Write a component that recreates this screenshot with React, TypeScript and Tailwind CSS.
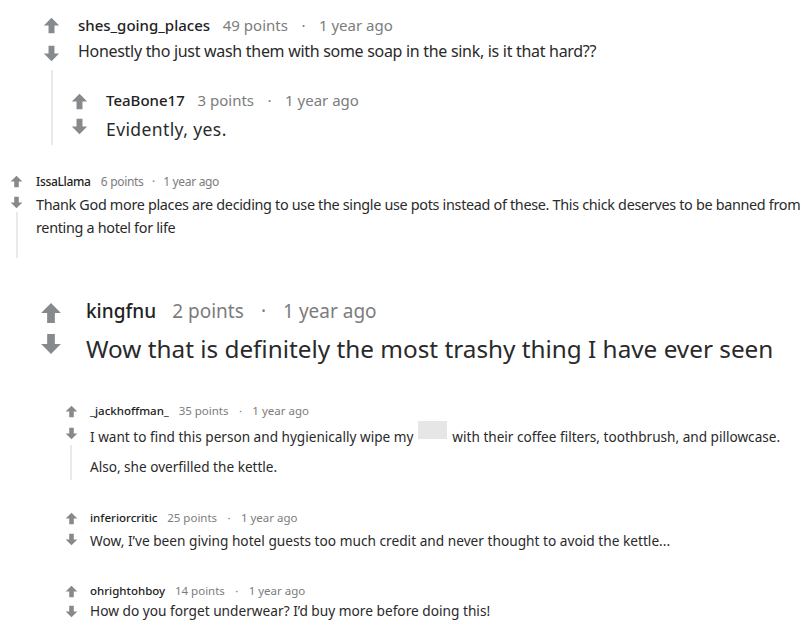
import React from 'react';

type Dir = 'up' | 'down';

const Arrow = ({ dir, size }: { dir: Dir; size: number }) => (
    <svg width={size} height={size} viewBox="0 0 20 20" className="block shrink-0">
        <path
            d={dir === 'up' ? 'M10 1 L19 10 H13.5 V19 H6.5 V10 H1 Z' : 'M10 19 L19 10 H13.5 V1 H6.5 V10 H1 Z'}
            fill="#878a8c"
        />
    </svg>
);

interface CommentProps {
    user: string;
    points: string;
    arrow: number;
    colClass: string; // vote column: width + top offset
    downClass: string; // space between up and down arrows
    lineClass?: string; // thread line, if any
    contentClass: string;
    metaClass: string;
    bodyClass: string;
    dotClass?: string;
    className?: string;
    children: React.ReactNode;
    replies?: React.ReactNode;
}

const Comment: React.FC<CommentProps> = ({
    user, points, arrow, colClass, downClass, lineClass, contentClass, metaClass, bodyClass, dotClass, className, children, replies,
}) => (
    <div className={`flex ${className ?? ''}`}>
        <div className={`flex flex-col items-center shrink-0 ${colClass}`}>
            <Arrow dir="up" size={arrow} />
            <div className={downClass}>
                <Arrow dir="down" size={arrow} />
            </div>
            {lineClass && <div className={`w-[2px] bg-[#e8e9eb] ${lineClass}`} />}
        </div>
        <div className={`flex flex-col ${contentClass}`}>
            <div className={`flex items-baseline whitespace-nowrap text-[#7c7c7c] ${metaClass}`}>
                <span className="text-[#222] font-medium">{user}</span>
                <span className="ml-[0.85em]">{points}</span>
                <span className={dotClass ?? 'mx-[0.9em]'}>·</span>
                <span>1 year ago</span>
            </div>
            <div className={`text-[#2a2a2a] ${bodyClass}`}>{children}</div>
            {replies}
        </div>
    </div>
);

export default function App() {
    return (
        <div className="w-[805px] h-[630px] overflow-hidden bg-white font-['Noto_Sans','Open_Sans',sans-serif]">
            {/* first thread */}
            <Comment
                className="ml-[43px] pt-[16px]"
                user="shes_going_places"
                points="49 points"
                arrow={17}
                colClass="w-[17px] pt-[1px]"
                downClass="mt-[11px]"
                lineClass="mt-[8px] flex-1"
                contentClass="ml-[18px]"
                metaClass="text-[15px] leading-[18px]"
                bodyClass="mt-[1px] text-[16px] leading-[32px] tracking-[-0.3px]"
                replies={
                    <Comment
                        className="-ml-[8px] mt-[24px]"
                        user="TeaBone17"
                        points="3 points"
                        arrow={17}
                        colClass="w-[18px] pt-[2px]"
                        downClass="mt-[8px]"
                        contentClass="ml-[18px]"
                        metaClass="text-[15px] leading-[18px]"
                        bodyClass="mt-[4px] text-[17.5px] leading-[32px] tracking-[0.4px]"
                    >
                        Evidently, yes.
                    </Comment>
                }
            >
                Honestly tho just wash them with some soap in the sink, is it that hard??
            </Comment>

            {/* IssaLlama */}
            <Comment
                className="ml-[10px] mt-[30px]"
                user="IssaLlama"
                points="6 points"
                arrow={13}
                colClass="w-[13px]"
                downClass="mt-[8px]"
                lineClass="mt-[3px] h-[46px]"
                contentClass="ml-[13px] tracking-[-0.02em]"
                metaClass="text-[12px] leading-[14px]"
                dotClass="mx-[0.7em]"
                bodyClass="mt-[4px] text-[14.4px] leading-[23px] w-[772px]"
            >
                Thank God more places are deciding to use the single use pots instead of these. This chick deserves to be banned from renting a hotel for life
            </Comment>

            {/* kingfnu */}
            <Comment
                className="ml-[40px] mt-[41px]"
                user="kingfnu"
                points="2 points"
                arrow={22}
                colClass="w-[22px] pt-[3px]"
                downClass="mt-[9px]"
                contentClass="ml-[24px]"
                metaClass="text-[19px] leading-[24px]"
                bodyClass="mt-[8px] text-[24.3px] leading-[36px]"
            >
                Wow that is definitely the most trashy thing I have ever seen
            </Comment>

            {/* replies to kingfnu */}
            <div className="ml-[65px] mt-[37px] flex flex-col">
                <Comment
                    user="_jackhoffman_"
                    points="35 points"
                    arrow={13}
                    colClass="w-[12px] pt-[1px]"
                    downClass="mt-[9px]"
                    lineClass="mt-[5px] h-[35px]"
                    contentClass="ml-[13px]"
                    metaClass="text-[11.5px] leading-[14px]"
                    bodyClass="mt-[3px] text-[13.6px] leading-[24px]"
                >
                    <p>
                        I want to find this person and hygienically wipe my<span className="inline-block align-[3px] w-[29px] h-[18px] bg-[#e6e6e6] mx-[5px]" />with their coffee filters, toothbrush, and pillowcase.
                    </p>
                    <p className="mt-[6px]">Also, she overfilled the kettle.</p>
                </Comment>

                <Comment
                    className="mt-[31px]"
                    user="inferiorcritic"
                    points="25 points"
                    arrow={13}
                    colClass="w-[12px] pt-[1px]"
                    downClass="mt-[8px]"
                    contentClass="ml-[13px]"
                    metaClass="text-[11.5px] leading-[14px]"
                    bodyClass="mt-[4px] text-[13.7px] leading-[24px]"
                >
                    Wow, I’ve been giving hotel guests too much credit and never thought to avoid the kettle...
                </Comment>

                <Comment
                    className="mt-[31px]"
                    user="ohrightohboy"
                    points="14 points"
                    arrow={13}
                    colClass="w-[12px] pt-[1px]"
                    downClass="mt-[7px]"
                    contentClass="ml-[13px]"
                    metaClass="text-[11.5px] leading-[14px]"
                    bodyClass="mt-[1px] text-[13.7px] leading-[24px]"
                >
                    How do you forget underwear? I’d buy more before doing this!
                </Comment>
            </div>
        </div>
    );
}
